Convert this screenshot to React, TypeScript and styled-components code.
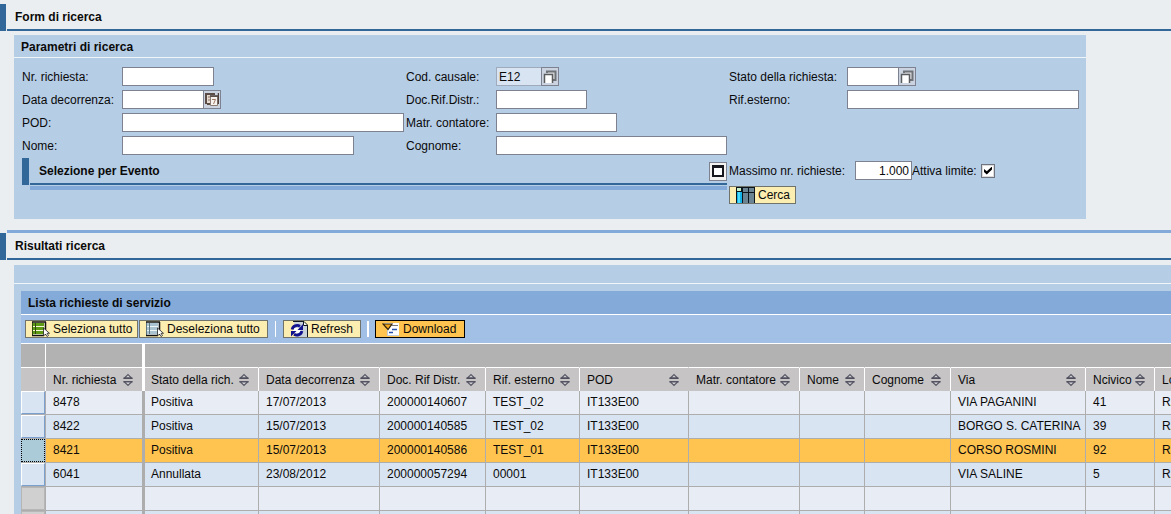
import React from "react";
import styled, { createGlobalStyle, css } from "styled-components";

const Global = createGlobalStyle`
  *, *::before, *::after { box-sizing: border-box; }
  body { margin: 0; background: #ebeef0; overflow-x: hidden; }
  body, input, button, table {
    font: 12px/16px "Liberation Sans", Arial, sans-serif;
    color: #0a0a0a;
  }
`;

const Page = styled.main`
  padding-top: 4px;
  overflow: hidden;
`;

const SectionHeader = styled.header<{ $compact?: boolean }>`
  display: flex;
  gap: 1px;
  height: 27px;
  &::before {
    content: "";
    flex: none;
    width: ${(p) => (p.$compact ? 7 : 6)}px;
    background: #326899;
  }
`;

const SectionTitle = styled.h2`
  flex: 1;
  margin: 0;
  padding: 5px 8px 0;
  border-bottom: 2px solid #326899;
  font-size: 12px;
  line-height: 16px;
`;

const TopRule = styled.div`
  height: 3px;
  margin: 11px 0 0 7px;
  background: #84aad9;
`;

const SearchPanel = styled.section`
  width: calc(100% - 99px);
  min-width: 1072px;
  height: 184px;
  margin: 4px 0 0 14px;
  background: #b6cde6;
`;

const PanelTitle = styled.h3`
  height: 23px;
  margin: 0;
  padding: 4px 7px 0;
  border-bottom: 1px solid #f0f5fa;
  font-size: 12px;
  line-height: 16px;
`;

const FormColumns = styled.form`
  display: grid;
  grid-template-columns: 384px 323px 1fr;
  grid-template-rows: repeat(4, 23px) 28px 20px;
  padding: 8px 7px 0 8px;
`;

const Field = styled.div<{ $label: number; $col: number; $row: number }>`
  grid-column: ${(p) => p.$col};
  grid-row: ${(p) => p.$row};
  display: grid;
  grid-template-columns: ${(p) => p.$label}px 1fr;
  align-items: center;
  height: 21px;
  white-space: nowrap;
`;

const Controls = styled.div`
  display: flex;
  align-items: center;
`;

const TextInput = styled.input<{ $w: number; $shaded?: boolean; $right?: boolean }>`
  width: ${(p) => p.$w}px;
  height: 19px;
  margin: 0;
  padding: 0 2px;
  border: 1px solid ${(p) => (p.$shaded ? "#9fabbc" : "#7e8290")};
  border-radius: 0;
  background: ${(p) => (p.$shaded ? "#d9e4f2" : "#fff")};
  text-align: ${(p) => (p.$right ? "right" : "left")};
  outline: none;
`;

const HelpButton = styled.button`
  width: 18px;
  height: 19px;
  margin-left: -1px;
  padding: 1px;
  border: 1px solid #7e8290;
  background: #cbd3e1;
  svg { display: block; }
`;

const EventBar = styled.div`
  grid-column: 1 / 3;
  grid-row: 5;
  margin-right: 2px;
`;

const EventTitle = styled(SectionTitle)`
  display: flex;
  justify-content: space-between;
  align-items: center;
  padding: 1px 0 0 9px;
`;

const EventShade = styled.div`
  height: 4px;
  margin: 1px 0 0 8px;
  background: #84aad9;
`;

const ExpandButton = styled.button`
  display: grid;
  place-items: center;
  width: 18px;
  height: 19px;
  padding: 0;
  border: 1px solid #7e8290;
  background: #f3f2f0;
  &::before {
    content: "";
    width: 12px;
    height: 12px;
    border: 2px solid #16161c;
    border-top-width: 3px;
    background: #fff;
  }
`;

const LimitRow = styled.div`
  grid-column: 3;
  grid-row: 5;
  display: flex;
  align-items: center;
  height: 25px;
  white-space: nowrap;
`;

const LimitLabel = styled.label<{ $w: number }>`
  width: ${(p) => p.$w}px;
`;

const CheckBox = styled.input`
  appearance: none;
  display: grid;
  place-items: center;
  width: 14px;
  height: 14px;
  margin: 0;
  border: 1px solid #70747e;
  background: #fff;
  box-shadow: inset 0 0 0 1px #dcdcdc;
  &:checked::before {
    content: "";
    width: 8px;
    height: 8px;
    background: #000;
    clip-path: polygon(0 30%, 35% 60%, 100% 0, 100% 38%, 35% 100%, 0 68%);
  }
`;

const SearchSlot = styled.div`
  grid-column: 3;
  grid-row: 6;
`;

const ToolButton = styled.button<{ $w: number; $active?: boolean }>`
  display: flex;
  align-items: center;
  gap: 3px;
  min-width: ${(p) => p.$w}px;
  height: 18px;
  padding: 0 4px 0 6px;
  border: 1px solid ${(p) => (p.$active ? "#000" : "#70726c")};
  background: ${(p) => (p.$active ? "#ffc44f" : "#fcedb0")};
  white-space: nowrap;
  svg { flex: none; }
`;

const ResultsPanel = styled.section`
  margin: 5px 0 0 14px;
  padding-left: 7px;
  background: #b6cde6;
`;

const PanelSpacer = styled.div`
  height: 19px;
  margin: 0 0 7px -7px;
  border-bottom: 1px solid #f0f5fa;
`;

const ListTitle = styled.h3`
  height: 24px;
  margin: 0;
  padding: 4px 7px 0;
  border-bottom: 1px solid #fff;
  background: #84aad9;
  font-size: 12px;
  line-height: 16px;
`;

const Toolbar = styled.div`
  display: flex;
  align-items: center;
  gap: 1px;
  height: 29px;
  padding: 0 4px;
  border-bottom: 1px solid #fff;
  background: #a2c0e6;
`;

const Divider = styled.span<{ $thick?: boolean }>`
  width: ${(p) => (p.$thick ? 2 : 1)}px;
  height: 16px;
  margin: 0 ${(p) => (p.$thick ? 5 : 6)}px;
  background: #fff;
`;

const Grid = styled.table`
  width: 1193px;
  table-layout: fixed;
  border-collapse: separate;
  border-spacing: 0;
`;

const cell = css`
  height: 24px;
  padding: 0 0 3px 7px;
  font-weight: normal;
  text-align: left;
  white-space: nowrap;
  border-right: 1px solid #adadad;
  &:nth-child(2) { border-right-width: 3px; }
  &:nth-child(3) { padding-left: 6px; }
`;

const BandCell = styled.th`
  ${cell}
  background: #b2b2b2;
  border-right-color: #b2b2b2;
  border-bottom: 1px solid #fff;
  &:nth-child(-n + 2) { border-right-color: #fff; }
`;

const HeadCell = styled.th<{ $noRule?: boolean }>`
  ${cell}
  height: 23px;
  padding: 0 9px 0 7px;
  background: #c6c4c5;
  border-right-color: ${(p) => (p.$noRule ? "#c6c4c5" : "#fff")};
  &:first-child { padding: 0; }
`;

const HeadContent = styled.div`
  display: flex;
  align-items: center;
  justify-content: space-between;
  svg { flex: none; }
`;

const Row = styled.tr<{ $tone: "plain" | "alt" | "selected" }>`
  background: ${(p) => ({ plain: "#e8edf5", alt: "#d9e4f2", selected: "#ffc44f" })[p.$tone]};
`;

const DataCell = styled.td`
  ${cell}
  padding-bottom: 2px;
  border-bottom: 1px solid #adadad;
`;

const SelectorCell = styled(DataCell)`
  padding: 0;
`;

const RowSelector = styled.button<{ $state: "normal" | "selected" | "empty" }>`
  display: block;
  width: 100%;
  height: 23px;
  padding: 0;
  ${(p) =>
    p.$state === "selected"
      ? "border: 1px dotted #000; background: #abcbd8;"
      : p.$state === "empty"
        ? "border: 1px solid #b6b6b6; background: #d0d0d0;"
        : "border: 1px solid; border-color: #fff #7ba0cf #7ba0cf #fff; background: #d9e4f2;"}
`;

const PickIcon = () => (
  <svg width="14" height="15" viewBox="0 0 14 15">
    <path d="M4 4V2.500h8.500V11H10" fill="#dcdde0" stroke="#6f7276" strokeWidth="2" />
    <path d="M2 6h7.500v8H2z" fill="#fff" />
    <path d="M1.500 14V5.500h8V14" fill="none" stroke="#5a5c5e" strokeWidth="1.500" />
  </svg>
);

const CalendarIcon = () => (
  <svg width="14" height="15" viewBox="0 0 14 15">
    <path d="M1 12V2h9M2 12h3" fill="none" stroke="#5b4c46" strokeWidth="2" />
    <path d="M2 3h3v8H2z" fill="#e6dbd3" />
    <path d="M3 5h2M3 8h2" stroke="#8a7062" />
    <path d="M5.500 4.500h7v9h-7z" fill="#f7f2ee" stroke="#8a7b73" />
    <path d="M13.500 1v11M5 4h8" stroke="#4d403b" strokeWidth="1.500" />
    <path d="M7 7.500h3.500L8.500 12" fill="none" stroke="#a07868" />
  </svg>
);

const SearchIcon = () => (
  <svg width="19" height="16" viewBox="0 0 19 16">
    <path d="M0 0h19v16H0z" fill="#0d151c" />
    <path d="M1 5h5v11H1z" fill="#12b4ea" />
    <path d="M2 5h2v11H2z" fill="#4bdcff" />
    <path d="M1 1h4v3H1z" fill="#c9efc8" />
    <path d="M7 1h5v4H7zM13 1h5v4h-5zM7 6h5v10H7zM13 6h5v10h-5z" fill="#6b8494" />
  </svg>
);

const SelectIcon = ({ tone }: { tone: "on" | "off" }) => {
  const [bar, back, edge] = tone === "on" ? ["#5f9a14", "#f6f8dc", "#2f4a10"] : ["#a9c4d0", "#eef5f7", "#5c7480"];
  return (
    <svg width="18" height="16" viewBox="0 0 18 16">
      <path d="M0 1h13v13H0z" fill={back} />
      <path d="M1 2h11v3H1zM1 6h11v3H1zM1 10h11v3H1z" fill={bar} />
      <path d="M.5 14V1M3.500 2v11" stroke={edge} />
      <path d="M0 1h14M13.500 1v13M0 14.500h12" stroke="#111" strokeWidth="1.500" />
      <path d="M11.500 7v8l2-2 1.500 2.500 1.500-1-1.500-2.200h2.500z" fill="#fff" stroke="#222" strokeWidth=".8" />
    </svg>
  );
};

const RefreshIcon = () => (
  <svg width="18" height="16" viewBox="0 0 18 16">
    <path d="M4 1h10l3 3v12H6z" fill="#c9d2db" />
    <path d="M3 .5h11L17.500 4v12" fill="none" stroke="#111820" />
    <path d="M13.500 1v3.500H17" fill="#fff" stroke="#111820" />
    <path d="M3 7h8v5H3z" fill="#fff" />
    <path d="M2.200 8.500A5 4.500 0 0 1 10 5.200M11.800 10A5 4.500 0 0 1 4 13.300" fill="none" stroke="#12128e" strokeWidth="2.800" />
    <path d="M13 3v6H7.500zM1 15.500V10h5.500z" fill="#12128e" />
  </svg>
);

const DownloadIcon = () => (
  <svg width="18" height="15" viewBox="0 0 18 15">
    <path d="M2 1h15v13H5V7z" fill="#fff" />
    <path d="M5.500 8v6M5 13.500h12" stroke="#c3cbd6" />
    <path d="M1 2h9L6 7.500z" fill="#f5a81c" stroke="#2e2008" strokeWidth="1.200" />
    <path d="M10 3.500h6" stroke="#777" />
    <path d="M10 7.500h5M7 10.500h4" stroke="#2450a8" strokeWidth="1.500" />
  </svg>
);

const SortIcon = () => (
  <svg width="10" height="14" viewBox="0 0 10 14">
    <path d="M1.500 5 5 1.500 8.500 5z" fill="#d4d4d8" stroke="#5a5a68" strokeWidth="1.200" />
    <path d="M.5 5.200h9M.5 8.800h9" stroke="#4e4e5c" strokeWidth="1.600" />
    <path d="M1.500 9 5 12.500 8.500 9z" fill="#d4d4d8" stroke="#5a5a68" strokeWidth="1.200" />
  </svg>
);

const widths = [25, 99, 114, 121, 106, 94, 109, 111, 65, 86, 135, 69, 59];

const headings = [
  "Nr. richiesta", "Stato della rich.", "Data decorrenza", "Doc. Rif Distr.", "Rif. esterno", "POD",
  "Matr. contatore", "Nome", "Cognome", "Via", "Ncivico", "Località",
];

const rows = [
  ["8478", "Positiva", "17/07/2013", "200000140607", "TEST_02", "IT133E00", "", "", "", "VIA PAGANINI", "41", "RA"],
  ["8422", "Positiva", "15/07/2013", "200000140585", "TEST_02", "IT133E00", "", "", "", "BORGO S. CATERINA", "39", "RA"],
  ["8421", "Positiva", "15/07/2013", "200000140586", "TEST_01", "IT133E00", "", "", "", "CORSO ROSMINI", "92", "RA"],
  ["6041", "Annullata", "23/08/2012", "200000057294", "00001", "IT133E00", "", "", "", "VIA SALINE", "5", "RA"],
  Array(12).fill(""),
  Array(12).fill(""),
];

type FormFieldProps = {
  id: string;
  label: string;
  col: number;
  row: number;
  labelWidth: number;
  width: number;
  value?: string;
  shaded?: boolean;
  help?: React.ReactNode;
};

const FormField = ({ id, label, col, row, labelWidth, width, value, shaded, help }: FormFieldProps) => (
  <Field $label={labelWidth} $col={col} $row={row}>
    <label htmlFor={id}>{label}</label>
    <Controls>
      <TextInput id={id} $w={width} $shaded={shaded} defaultValue={value} />
      {help && <HelpButton type="button" aria-label={label}>{help}</HelpButton>}
    </Controls>
  </Field>
);

export default function App() {
  return (
    <>
      <Global />
      <Page>
        <SectionHeader>
          <SectionTitle>Form di ricerca</SectionTitle>
        </SectionHeader>
        <SearchPanel>
          <PanelTitle>Parametri di ricerca</PanelTitle>
          <FormColumns onSubmit={(e) => e.preventDefault()}>
            <FormField id="nr" label="Nr. richiesta:" col={1} row={1} labelWidth={100} width={92} />
            <FormField id="data" label="Data decorrenza:" col={1} row={2} labelWidth={100} width={82} help={<CalendarIcon />} />
            <FormField id="pod" label="POD:" col={1} row={3} labelWidth={100} width={282} />
            <FormField id="nome" label="Nome:" col={1} row={4} labelWidth={100} width={232} />
            <FormField id="causale" label="Cod. causale:" col={2} row={1} labelWidth={90} width={46} value="E12" shaded help={<PickIcon />} />
            <FormField id="doc" label="Doc.Rif.Distr.:" col={2} row={2} labelWidth={90} width={91} />
            <FormField id="matr" label="Matr. contatore:" col={2} row={3} labelWidth={90} width={121} />
            <FormField id="cognome" label="Cognome:" col={2} row={4} labelWidth={90} width={231} />
            <FormField id="stato" label="Stato della richiesta:" col={3} row={1} labelWidth={118} width={52} help={<PickIcon />} />
            <FormField id="rif" label="Rif.esterno:" col={3} row={2} labelWidth={118} width={232} />
            <EventBar>
              <SectionHeader $compact>
                <EventTitle as="h4">
                  Selezione per Evento
                  <ExpandButton type="button" aria-label="Espandi" />
                </EventTitle>
              </SectionHeader>
              <EventShade />
            </EventBar>
            <LimitRow>
              <LimitLabel $w={126} htmlFor="max">Massimo nr. richieste:</LimitLabel>
              <TextInput id="max" $w={57} $right defaultValue="1.000" />
              <LimitLabel $w={69} htmlFor="limite">Attiva limite:</LimitLabel>
              <CheckBox id="limite" type="checkbox" defaultChecked />
            </LimitRow>
            <SearchSlot>
              <ToolButton type="submit" $w={67}><SearchIcon />Cerca</ToolButton>
            </SearchSlot>
          </FormColumns>
        </SearchPanel>

        <TopRule />
        <SectionHeader>
          <SectionTitle>Risultati ricerca</SectionTitle>
        </SectionHeader>
        <ResultsPanel>
          <PanelSpacer />
          <ListTitle>Lista richieste di servizio</ListTitle>
          <Toolbar>
            <ToolButton type="button" $w={113}><SelectIcon tone="on" />Seleziona tutto</ToolButton>
            <ToolButton type="button" $w={129}><SelectIcon tone="off" />Deseleziona tutto</ToolButton>
            <Divider />
            <ToolButton type="button" $w={78}><RefreshIcon />Refresh</ToolButton>
            <Divider $thick />
            <ToolButton type="button" $w={90} $active><DownloadIcon />Download</ToolButton>
          </Toolbar>
          <Grid>
            <colgroup>
              {widths.map((w, i) => <col key={i} width={w} />)}
            </colgroup>
            <thead>
              <tr>{widths.map((_, i) => <BandCell key={i} />)}</tr>
              <tr>
                <HeadCell />
                {headings.map((h) => (
                  <HeadCell key={h} scope="col" $noRule={h === "POD"}>
                    <HeadContent>{h}<SortIcon /></HeadContent>
                  </HeadCell>
                ))}
              </tr>
            </thead>
            <tbody>
              {rows.map((r, i) => (
                <Row key={i} $tone={i === 2 ? "selected" : i % 2 ? "alt" : "plain"}>
                  <SelectorCell>
                    <RowSelector
                      type="button"
                      aria-label={`Riga ${i + 1}`}
                      $state={i === 2 ? "selected" : i > 3 ? "empty" : "normal"}
                    />
                  </SelectorCell>
                  {r.map((v, j) => <DataCell key={j}>{v}</DataCell>)}
                </Row>
              ))}
            </tbody>
          </Grid>
        </ResultsPanel>
      </Page>
    </>
  );
}
